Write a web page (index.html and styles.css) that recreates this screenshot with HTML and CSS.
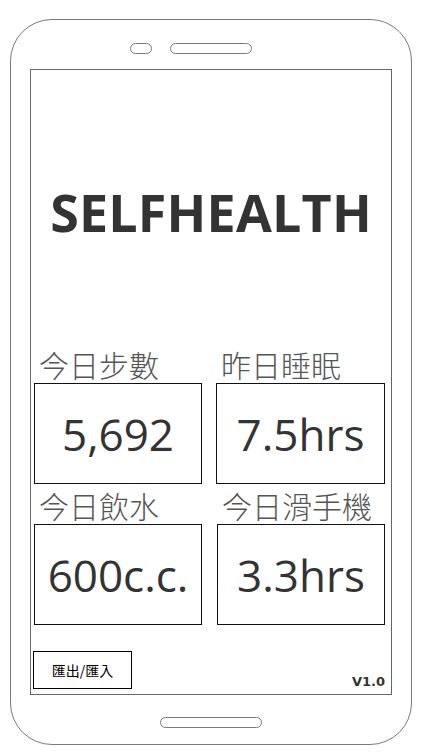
FILE: index.html
```html
<!DOCTYPE html>
<html lang="zh-Hant">
<head>
<meta charset="utf-8">
<title>SELFHEALTH</title>
<link rel="stylesheet" href="styles.css">
</head>
<body>
<div class="phone">
  <div class="speaker-row">
    <span class="pill pill-small"></span>
    <span class="pill pill-long"></span>
  </div>
  <div class="screen">
    <h1 class="title">SELFHEALTH</h1>
    <div class="stats">
      <div class="stat">
        <div class="label">今日步數</div>
        <div class="box">5,692</div>
      </div>
      <div class="stat">
        <div class="label">昨日睡眠</div>
        <div class="box">7.5hrs</div>
      </div>
      <div class="stat stat-second">
        <div class="label">今日飲水</div>
        <div class="box">600c.c.</div>
      </div>
      <div class="stat stat-second stat-shift">
        <div class="label">今日滑手機</div>
        <div class="box">3.3hrs</div>
      </div>
    </div>
    <div class="footer">
      <button class="io-btn">匯出/匯入</button>
      <span class="version">V1.0</span>
    </div>
  </div>
  <div class="home"></div>
</div>
</body>
</html>
```

FILE: styles.css
```css
html, body {
  margin: 0;
  padding: 0;
  background: #fff;
}

body {
  font-family: "Open Sans", "Noto Sans CJK TC", sans-serif;
  color: #333;
}

.phone {
  box-sizing: border-box;
  margin: 19px 0 0 10px;
  width: 402px;
  height: 726px;
  border: 1px solid #7a7a7a;
  border-radius: 42px;
  display: flex;
  flex-direction: column;
}

.speaker-row {
  display: flex;
  gap: 18px;
  padding: 23px 0 0 119px;
  height: 11px;
}

.pill {
  box-sizing: border-box;
  display: block;
  height: 11px;
  border: 1px solid #7a7a7a;
  border-radius: 6px;
}

.pill-small { width: 22px; }
.pill-long { width: 82px; }

.screen {
  box-sizing: border-box;
  margin: 15px 0 0 19px;
  width: 362px;
  height: 626px;
  border: 1px solid #666;
  display: flex;
  flex-direction: column;
}

.title {
  margin: 115px 0 0 0;
  font-family: "Open Sans", sans-serif;
  font-weight: 700;
  font-size: 52px;
  line-height: 53px;
  text-align: center;
  color: #333;
  letter-spacing: 0.2px;
}

.stats {
  margin-top: 111px;
  padding-left: 3px;
  display: grid;
  grid-template-columns: 168px 169px;
  column-gap: 14px;
  row-gap: 6px;
}

.stat {
  display: flex;
  flex-direction: column;
  gap: 4px;
}

.stat-shift {
  margin-left: 1px;
}

.label {
  font-family: "Noto Sans CJK TC", sans-serif;
  font-weight: 300;
  font-size: 30px;
  line-height: 30px;
  padding-left: 5px;
  color: #555;
  white-space: nowrap;
}

.box {
  box-sizing: border-box;
  height: 101px;
  border: 1px solid #111;
  display: flex;
  align-items: center;
  justify-content: center;
  font-family: "Open Sans", sans-serif;
  font-size: 44px;
  color: #333;
}

.footer {
  margin-top: auto;
  display: flex;
  align-items: flex-end;
  justify-content: space-between;
  padding: 0 6px 5px 2px;
}

.io-btn {
  box-sizing: border-box;
  width: 99px;
  height: 38px;
  border: 1px solid #000;
  background: #fff;
  padding: 0;
  font-family: "Noto Sans CJK TC", sans-serif;
  font-size: 14px;
  color: #000;
}

.version {
  font-family: "DejaVu Sans", sans-serif;
  font-weight: 700;
  font-size: 13px;
  line-height: 13px;
  color: #333;
  padding-bottom: 1px;
}

.home {
  box-sizing: border-box;
  margin: 22px auto 0 auto;
  width: 102px;
  height: 11px;
  border: 1px solid #7a7a7a;
  border-radius: 6px;
}
```
